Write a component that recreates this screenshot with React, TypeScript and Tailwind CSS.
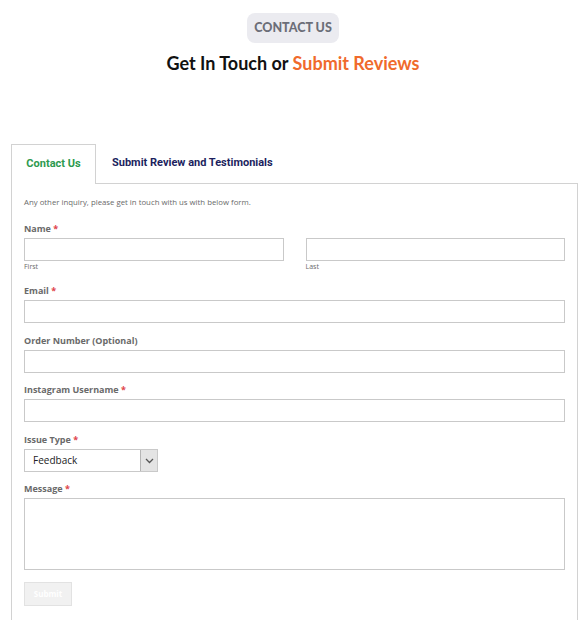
import React from "react";

function Label({ text, required }: { text: string; required?: boolean }) {
  return (
    <div className="text-[9px] leading-[12px] font-bold text-[#6a6a6a] font-['Open_Sans',sans-serif]">
      {text}
      {required && <span className="text-[#e0434b]"> *</span>}
    </div>
  );
}

function Input({ className = "" }: { className?: string }) {
  return <div className={"h-[23px] border border-[#c9c9c9] bg-white " + className} />;
}

export default function App() {
  return (
    <div className="w-[586px] h-[620px] bg-white overflow-hidden font-['Open_Sans',sans-serif]">
      <div className="flex flex-col items-center">
        <div className="mt-[13px] h-[30px] w-[92px] rounded-lg bg-[#ebebf0] flex items-center justify-center text-[12.5px] font-black text-[#6b6e78] font-['Lato',sans-serif]">
          CONTACT US
        </div>
        <div className="mt-[9px] text-[18px] leading-[22px] font-bold text-[#111] font-['Lato',sans-serif]">
          Get In Touch or <span className="text-[#f06a2c]">Submit Reviews</span>
        </div>
      </div>

      <div className="mt-[69px] ml-[11px] w-[567px]">
        <div className="flex items-end font-['Roboto',sans-serif] text-[11px] font-bold">
          <div className="w-[85px] h-[40px] border border-b-0 border-[#d2d2d2] bg-white -mb-px relative z-10 flex items-center justify-center text-[#2e9a4f]">
            Contact Us
          </div>
          <div className="ml-[16px] h-[40px] flex items-center text-[#1c1f5e]">Submit Review and Testimonials</div>
        </div>
        <div className="border border-[#d2d2d2] px-[12px] pt-[12px] h-[460px]">
          <div className="text-[7.8px] leading-[12px] text-[#6a6a6a]">
            Any other inquiry, please get in touch with us with below form.
          </div>

          <div className="mt-[15px]">
            <Label text="Name" required />
            <div className="mt-[3px] flex gap-[22px]">
              <div className="flex-1">
                <Input />
                <div className="mt-[1px] text-[7px] leading-[10px] text-[#6a6a6a]">First</div>
              </div>
              <div className="flex-1">
                <Input />
                <div className="mt-[1px] text-[7px] leading-[10px] text-[#6a6a6a]">Last</div>
              </div>
            </div>
          </div>

          <div className="mt-[13px]">
            <Label text="Email" required />
            <Input className="mt-[3px]" />
          </div>

          <div className="mt-[12px]">
            <Label text="Order Number (Optional)" />
            <Input className="mt-[3px]" />
          </div>

          <div className="mt-[11px]">
            <Label text="Instagram Username" required />
            <Input className="mt-[3px]" />
          </div>

          <div className="mt-[12px]">
            <Label text="Issue Type" required />
            <div className="mt-[3px] w-[134px] h-[23px] border border-[#c9c9c9] flex">
              <div className="flex-1 flex items-center pl-[8px] text-[10px] text-[#222]">Feedback</div>
              <div className="w-[17px] bg-[#e4e4e4] border-l border-[#b5b5b5] flex items-center justify-center">
                <svg width="9" height="6" viewBox="0 0 9 6">
                  <path d="M1 1l3.5 3.5L8 1" fill="none" stroke="#555" strokeWidth="1.3" />
                </svg>
              </div>
            </div>
          </div>

          <div className="mt-[11px]">
            <Label text="Message" required />
            <div className="mt-[3px] h-[72px] border border-[#c9c9c9]" />
          </div>

          <div className="mt-[12px] w-[48px] h-[24px] bg-[#f1f1f1] border border-[#e2e2e2] flex items-center justify-center text-[8px] font-bold text-white">
            Submit
          </div>
        </div>
      </div>
    </div>
  );
}
